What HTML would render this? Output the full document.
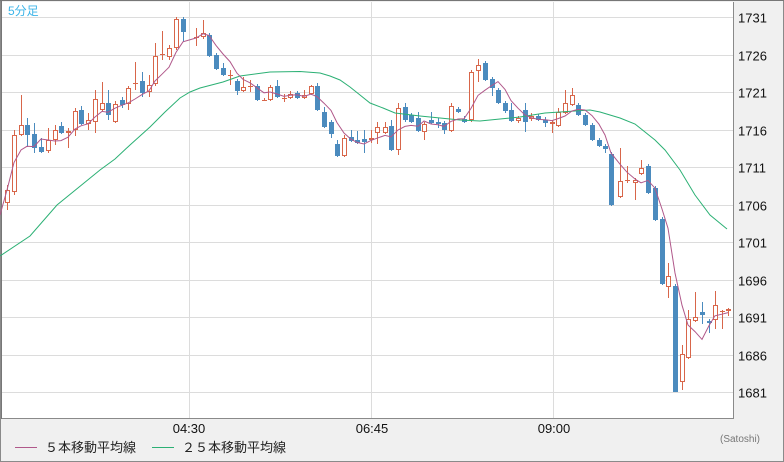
<!DOCTYPE html>
<html><head><meta charset="utf-8"><style>
html,body{margin:0;padding:0;width:784px;height:462px;overflow:hidden;background:#f0f0f0;font-family:"Liberation Sans","Noto Sans CJK JP",sans-serif}
svg{position:absolute;left:0;top:0}
</style></head><body>
<svg id="s" width="784" height="462" xmlns="http://www.w3.org/2000/svg">
<rect x="0.5" y="0.5" width="783" height="461" fill="#f0f0f0" stroke="#8a8a8a"/>
<rect x="2" y="2" width="731" height="416" fill="#fff"/>
<g id="grid" stroke="#dcdcdc" stroke-width="1"></g>
<line x1="733.5" y1="2" x2="733.5" y2="418" stroke="#8a8a8a"/>
<line x1="2" y1="418.5" x2="734" y2="418.5" stroke="#8a8a8a"/>
<line x1="1.5" y1="0" x2="1.5" y2="419" stroke="#777"/>
<line x1="0" y1="0.5" x2="784" y2="0.5" stroke="#777"/>
<g id="c"></g>
<polyline fill="none" stroke="#2bb074" stroke-width="1" points="0,256 30,236 57,205 100,170 115,159 130,145 150,127 165,112 180,98 190,92 200,88 223,82 240,76 270,72 300,71.5 320,73 330,76 340,80 350,87 360,95 370,103 383,108 395,113 420,116 440,118 460,120 480,121 500,119 520,117 545,113 560,112 590,110 600,112 620,118 635,124 650,136 655,140 665,150 680,170 695,195 710,215 727,229"/>
<polyline id="ma5" fill="none" stroke="#b0588a" stroke-width="1"/>
<text x="8" y="15" font-size="12" fill="#3cb4e8">5分足</text>
<g font-size="13" fill="#111" id="yl"></g>
<g font-size="13" fill="#111" text-anchor="middle">
<text x="189" y="433">04:30</text><text x="372" y="433">06:45</text><text x="554" y="433">09:00</text></g>
<text x="720" y="442" font-size="10" fill="#777">(Satoshi)</text>
<line x1="15" y1="447.5" x2="37" y2="447.5" stroke="#b0588a"/>
<text x="45" y="452" font-size="13" fill="#222">５本移動平均線</text>
<line x1="152" y1="447.5" x2="174" y2="447.5" stroke="#2bb074"/>
<text x="182" y="452" font-size="13" fill="#222">２５本移動平均線</text>
</svg>
<script>
var NS="http://www.w3.org/2000/svg";
function el(p,t,a){var e=document.createElementNS(NS,t);for(var k in a)e.setAttribute(k,a[k]);p.appendChild(e);return e;}
var g=document.getElementById('grid'),yl=document.getElementById('yl');
for(var i=0;i<11;i++){var y=Math.round(17+i*37.5)+0.5;el(g,'line',{x1:2,y1:y,x2:733,y2:y});
var t=el(yl,'text',{x:738,y:y+5});t.textContent=1731-5*i;}
[189.5,371.5,553.5].forEach(function(x){el(g,'line',{x1:x,y1:2,x2:x,y2:418});});
var D=[[7,'u',190,203,185,210],[14,'u',135,192,130,195],[21,'u',125,135,95,136],[27,'d',125,135,118,147],[34,'d',134,148,123,153],[41,'d',147,152,138,153],[48,'u',140,151,128,153],[55,'u',130,140,125,145],[61,'d',126,133,122,134],[68,'u',131,133,128,148],[75,'u',111,130,108,136],[81,'d',110,124,106,125],[88,'u',120,124,113,130],[95,'u',99,122,90,133],[102,'u',103,110,82,111],[108,'d',103,115,90,120],[115,'u',104,122,101,123],[122,'d',100,105,97,108],[128,'u',88,104,86,110],[135,'j',83,83,62,90],[142,'d',81,93,72,97],[149,'u',85,92,75,97],[155,'u',56,84,43,86],[162,'j',54,54,31,60],[169,'u',48,57,45,60],[176,'u',19,48,17,50],[183,'d',19,32,17,42],[196,'j',37,37,28,46],[203,'u',33,37,20,39],[209,'d',35,56,33,57],[216,'d',55,69,53,70],[223,'d',68,75,63,76],[230,'j',75,75,70,85],[237,'d',81,91,79,95],[243,'u',87,91,77,92],[250,'j',86,86,80,92],[257,'d',86,100,84,101],[264,'j',100,100,98,101],[270,'u',87,100,85,101],[277,'d',86,97,80,98],[284,'j',98,98,94,102],[290,'u',94,98,91,99],[297,'d',93,98,91,99],[304,'u',95,98,90,99],[311,'u',86,94,85,95],[317,'d',86,110,83,111],[324,'d',112,127,107,128],[331,'d',122,134,120,138],[337,'d',144,156,140,157],[344,'u',138,156,135,157],[351,'d',137,141,130,142],[357,'d',140,143,131,144],[364,'d',139,142,130,153],[371,'u',138,140,130,143],[377,'u',127,133,122,144],[385,'u',127,133,122,134],[391,'d',126,150,120,151],[398,'u',108,150,103,155],[405,'d',107,120,103,122],[411,'d',115,122,113,123],[418,'d',118,131,112,132],[424,'u',124,132,122,140],[431,'d',120,123,112,124],[438,'d',122,124,118,128],[444,'d',123,130,121,134],[451,'u',106,131,103,132],[458,'d',109,112,107,113],[464,'d',119,122,116,123],[471,'u',72,120,70,122],[478,'u',65,71,59,82],[485,'d',63,80,61,81],[492,'d',79,88,77,96],[498,'d',90,103,88,104],[505,'d',103,111,101,113],[511,'d',110,121,103,122],[518,'u',118,121,116,123],[525,'d',110,122,103,132],[531,'u',116,119,113,121],[538,'d',116,120,114,121],[545,'d',120,123,117,127],[552,'u',122,124,120,133],[558,'u',112,126,108,127],[565,'u',103,113,90,114],[572,'u',95,105,88,106],[578,'d',105,115,103,116],[585,'d',115,125,113,126],[592,'d',125,140,123,141],[599,'d',140,146,138,147],[605,'d',146,149,144,153],[611,'d',154,205,152,206],[620,'u',181,197,148,198],[627,'j',180,180,166,183],[635,'u',180,183,178,200],[641,'u',168,174,160,175],[648,'d',166,193,164,194],[655,'d',188,220,186,221],[662,'d',219,284,217,285],[668,'u',276,287,263,298],[675,'d',286,392,284,392],[682,'u',354,382,345,390],[688,'u',319,358,310,359],[695,'u',317,321,292,322],[702,'d',312,315,302,324],[709,'d',321,323,319,333],[715,'u',305,320,291,329],[722,'j',311,311,310,329],[728,'u',309,311,308,316]];
var cg=document.getElementById('c'),R='#d8664a',B='#4b8bbe',cl=[];
D.forEach(function(d){var x=d[0],col=d[1]=='d'?B:R;
el(cg,'line',{x1:x+0.5,y1:d[4],x2:x+0.5,y2:d[5],stroke:col});
if(d[1]=='j'){el(cg,'line',{x1:x-2,y1:d[2]+0.5,x2:x+3,y2:d[2]+0.5,stroke:col});cl.push(d[2]);}
else if(d[1]=='d'){el(cg,'rect',{x:x-2,y:d[2],width:5,height:Math.max(1,d[3]-d[2]),fill:B});cl.push(d[3]);}
else{el(cg,'rect',{x:x-1.5,y:d[2]+0.5,width:4,height:Math.max(1,d[3]-d[2]-1),fill:'#fff',stroke:R});cl.push(d[2]);}});
var pts=[];for(var i=0;i<D.length;i++){var s=0,n=0;for(var j=Math.max(0,i-4);j<=i;j++){s+=cl[j];n++;}pts.push(D[i][0]+','+(s/n).toFixed(1));}
pts.unshift('0,215');
document.getElementById('ma5').setAttribute('points',pts.join(' '));
</script>
</body></html>
